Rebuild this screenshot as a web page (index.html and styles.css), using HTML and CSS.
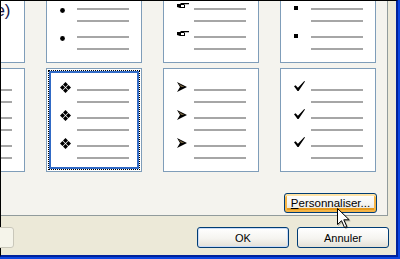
FILE: index.html
```html
<!DOCTYPE html>
<html lang="fr">
<head>
  <meta charset="UTF-8">
  <title>Puces</title>
  <link rel="stylesheet" href="styles.css">
</head>
<body>
  <div class="frame">
    <div class="dialog">
      <div class="panel">
        <div class="grid">
          <!-- row 1 -->
          <div class="tile none">(aucune)</div>

          <div class="tile">
            <div class="item"><span class="mark"><svg class="dot" width="5" height="5" viewBox="0 0 5 5"><circle cx="2.5" cy="2.5" r="2.4" fill="#000"/></svg></span><span class="lines"></span></div>
            <div class="item"><span class="mark"><svg class="dot" width="5" height="5" viewBox="0 0 5 5"><circle cx="2.5" cy="2.5" r="2.4" fill="#000"/></svg></span><span class="lines"></span></div>
            <div class="item"><span class="mark"><svg class="dot" width="5" height="5" viewBox="0 0 5 5"><circle cx="2.5" cy="2.5" r="2.4" fill="#000"/></svg></span><span class="lines"></span></div>
          </div>

          <div class="tile">
            <div class="item"><span class="mark"><svg class="hand" width="12" height="5" viewBox="0 0 12 5"><path d="M0 1h3l1-1h8v1.2h-5l1 .8v3h-5l-3-1z" fill="#000"/><path d="M4 2h3v2h-3z" fill="#fff"/></svg></span><span class="lines"></span></div>
            <div class="item"><span class="mark"><svg class="hand" width="12" height="5" viewBox="0 0 12 5"><path d="M0 1h3l1-1h8v1.2h-5l1 .8v3h-5l-3-1z" fill="#000"/><path d="M4 2h3v2h-3z" fill="#fff"/></svg></span><span class="lines"></span></div>
            <div class="item"><span class="mark"><svg class="hand" width="12" height="5" viewBox="0 0 12 5"><path d="M0 1h3l1-1h8v1.2h-5l1 .8v3h-5l-3-1z" fill="#000"/><path d="M4 2h3v2h-3z" fill="#fff"/></svg></span><span class="lines"></span></div>
          </div>

          <div class="tile">
            <div class="item"><span class="mark"><span class="square"></span></span><span class="lines"></span></div>
            <div class="item"><span class="mark"><span class="square"></span></span><span class="lines"></span></div>
            <div class="item"><span class="mark"><span class="square"></span></span><span class="lines"></span></div>
          </div>

          <!-- row 2 -->
          <div class="tile">
            <div class="item"><span class="mark"></span><span class="lines"></span></div>
            <div class="item"><span class="mark"></span><span class="lines"></span></div>
            <div class="item"><span class="mark"></span><span class="lines"></span></div>
          </div>

          <div class="tile selected">
            <div class="item"><span class="mark"><svg class="diamond" width="11" height="11" viewBox="0 0 11 11"><path d="M5.5 0l2.5 2.5-2.5 2.5-2.5-2.5zM5.5 6l2.5 2.5-2.5 2.5-2.5-2.5zM2.5 3l2.5 2.5-2.5 2.5-2.5-2.5zM8.5 3l2.5 2.5-2.5 2.5-2.5-2.5z" fill="#000"/></svg></span><span class="lines"></span></div>
            <div class="item"><span class="mark"><svg class="diamond" width="11" height="11" viewBox="0 0 11 11"><path d="M5.5 0l2.5 2.5-2.5 2.5-2.5-2.5zM5.5 6l2.5 2.5-2.5 2.5-2.5-2.5zM2.5 3l2.5 2.5-2.5 2.5-2.5-2.5zM8.5 3l2.5 2.5-2.5 2.5-2.5-2.5z" fill="#000"/></svg></span><span class="lines"></span></div>
            <div class="item"><span class="mark"><svg class="diamond" width="11" height="11" viewBox="0 0 11 11"><path d="M5.5 0l2.5 2.5-2.5 2.5-2.5-2.5zM5.5 6l2.5 2.5-2.5 2.5-2.5-2.5zM2.5 3l2.5 2.5-2.5 2.5-2.5-2.5zM8.5 3l2.5 2.5-2.5 2.5-2.5-2.5z" fill="#000"/></svg></span><span class="lines"></span></div>
          </div>

          <div class="tile">
            <div class="item"><span class="mark"><svg class="arrow" width="10" height="10" viewBox="0 0 10 10"><path d="M0 0l10 5-10 5 3-5z" fill="#000"/><path d="M1.5 1.5l6 3.5h-3.5z" fill="#6b5a3a"/></svg></span><span class="lines"></span></div>
            <div class="item"><span class="mark"><svg class="arrow" width="10" height="10" viewBox="0 0 10 10"><path d="M0 0l10 5-10 5 3-5z" fill="#000"/><path d="M1.5 1.5l6 3.5h-3.5z" fill="#6b5a3a"/></svg></span><span class="lines"></span></div>
            <div class="item"><span class="mark"><svg class="arrow" width="10" height="10" viewBox="0 0 10 10"><path d="M0 0l10 5-10 5 3-5z" fill="#000"/><path d="M1.5 1.5l6 3.5h-3.5z" fill="#6b5a3a"/></svg></span><span class="lines"></span></div>
          </div>

          <div class="tile">
            <div class="item"><span class="mark"><svg class="check" width="11" height="10" viewBox="0 0 11 10"><path d="M0 5.2l1.6-1 2.3 2.6L10.3 0l.7.6-6.4 9.4h-1.1z" fill="#000"/></svg></span><span class="lines"></span></div>
            <div class="item"><span class="mark"><svg class="check" width="11" height="10" viewBox="0 0 11 10"><path d="M0 5.2l1.6-1 2.3 2.6L10.3 0l.7.6-6.4 9.4h-1.1z" fill="#000"/></svg></span><span class="lines"></span></div>
            <div class="item"><span class="mark"><svg class="check" width="11" height="10" viewBox="0 0 11 10"><path d="M0 5.2l1.6-1 2.3 2.6L10.3 0l.7.6-6.4 9.4h-1.1z" fill="#000"/></svg></span><span class="lines"></span></div>
          </div>
        </div>

        <div class="panel-foot">
          <button class="btn hover"><u>P</u>ersonnaliser...</button>
        </div>
      </div>

      <div class="actions">
        <button class="btn disabled" aria-label="Réinitialiser"></button>
        <button class="btn default">OK</button>
        <button class="btn">Annuler</button>
      </div>
    </div>

    <svg class="cursor" width="13" height="21" viewBox="0 0 13 21">
      <path d="M0.5 0.5v16l4-3.8 3 6.8 2.3-1-3-6.7h5.4z" fill="#fff" stroke="#000" stroke-width="1" stroke-linejoin="miter"/>
    </svg>
  </div>
</body>
</html>
```

FILE: styles.css
```css
body {
  margin: 0;
  font-family: "Liberation Sans", Arial, sans-serif;
  background-color: #ECE9D8;
}

.frame {
  position: relative;
  width: 400px;
  height: 259px;
  box-sizing: border-box;
  border-right: 2px solid #0A45E0;
  border-bottom: 2px solid #0A45E0;
  overflow: hidden;
}

.dialog {
  height: 100%;
  box-sizing: border-box;
  border-top: 1px solid #000;
  border-left: 1px solid #000;
  border-right: 2px solid #00229C;
  border-bottom: 2px solid #00229C;
  background-color: #ECE9D8;
  display: flex;
  flex-direction: column;
}

.panel {
  width: 387px;
  box-sizing: border-box;
  border-right: 1px solid #919B9C;
  border-bottom: 1px solid #919B9C;
  background-color: #F4F3EE;
  padding-bottom: 2px;
  overflow: hidden;
}

.grid {
  display: grid;
  grid-template-columns: repeat(4, 96px);
  grid-auto-rows: 104px;
  column-gap: 21px;
  row-gap: 5px;
  margin: -42px 0 0 -72px;
}

.tile {
  position: relative;
  box-sizing: border-box;
  background-color: #FFFFFF;
  border: 1px solid #7F9DB9;
  padding-top: 20px;
}

.tile.none {
  display: flex;
  align-items: center;
  justify-content: center;
  padding: 0;
  font-size: 17px;
  color: #16164A;
}

/* focus rectangle + blue selection frame */
.tile.selected::before {
  content: '';
  position: absolute;
  inset: 1px;
  border: 1px dotted #000;
  box-shadow: inset 0 0 0 2px #316AC5;
}

.item {
  display: flex;
  height: 28px;
}

.mark {
  width: 17px;
  padding-left: 13px;
  flex-shrink: 0;
}

.mark svg {
  display: block;
}

.lines {
  width: 52px;
  height: 10px;
  border-top: 2px solid #A6A6A6;
  border-bottom: 2px solid #A6A6A6;
}

.dot { margin-top: 0; }
.hand { margin-top: -5px; }
.diamond { margin-top: -7px; }
.arrow { margin-top: -7px; }
.check { margin-top: -8px; }

.square {
  display: block;
  width: 4px;
  height: 4px;
  margin-top: -2px;
  background-color: #000;
}

.panel-foot {
  display: flex;
  justify-content: flex-end;
  padding-right: 10px;
  margin-top: 21px;
}

.btn {
  box-sizing: border-box;
  height: 20px;
  padding: 0;
  font-family: "Liberation Sans", Arial, sans-serif;
  font-size: 11px;
  color: #000;
  border: 1px solid #003C74;
  border-radius: 3px;
  background: linear-gradient(#FFFFFF 0%, #F5F4F0 55%, #E3E0D6 100%);
}

.btn.hover {
  width: 93px;
  font-size: 11.5px;
  box-shadow: inset 0 2px 0 #FFE3A6, inset 0 0 0 2px #F5B445, inset 0 -2px 0 2px #E59A1C;
}

.actions {
  display: flex;
  margin-top: 11px;
  padding-right: 7px;
}

.actions .btn {
  width: 92px;
  height: 21px;
}

.actions .btn.disabled {
  width: 91px;
  margin-left: -78px;
  border-color: #C9C7BA;
  background: #F5F4EA;
}

.actions .btn.default {
  margin-left: auto;
  box-shadow: inset 0 0 0 1px #C8DAF8;
}

.actions .btn + .btn + .btn {
  margin-left: 8px;
}

.cursor {
  position: absolute;
  left: 337px;
  top: 208px;
  filter: drop-shadow(1px 1px 0 rgba(0, 0, 0, 0.25));
}
```
